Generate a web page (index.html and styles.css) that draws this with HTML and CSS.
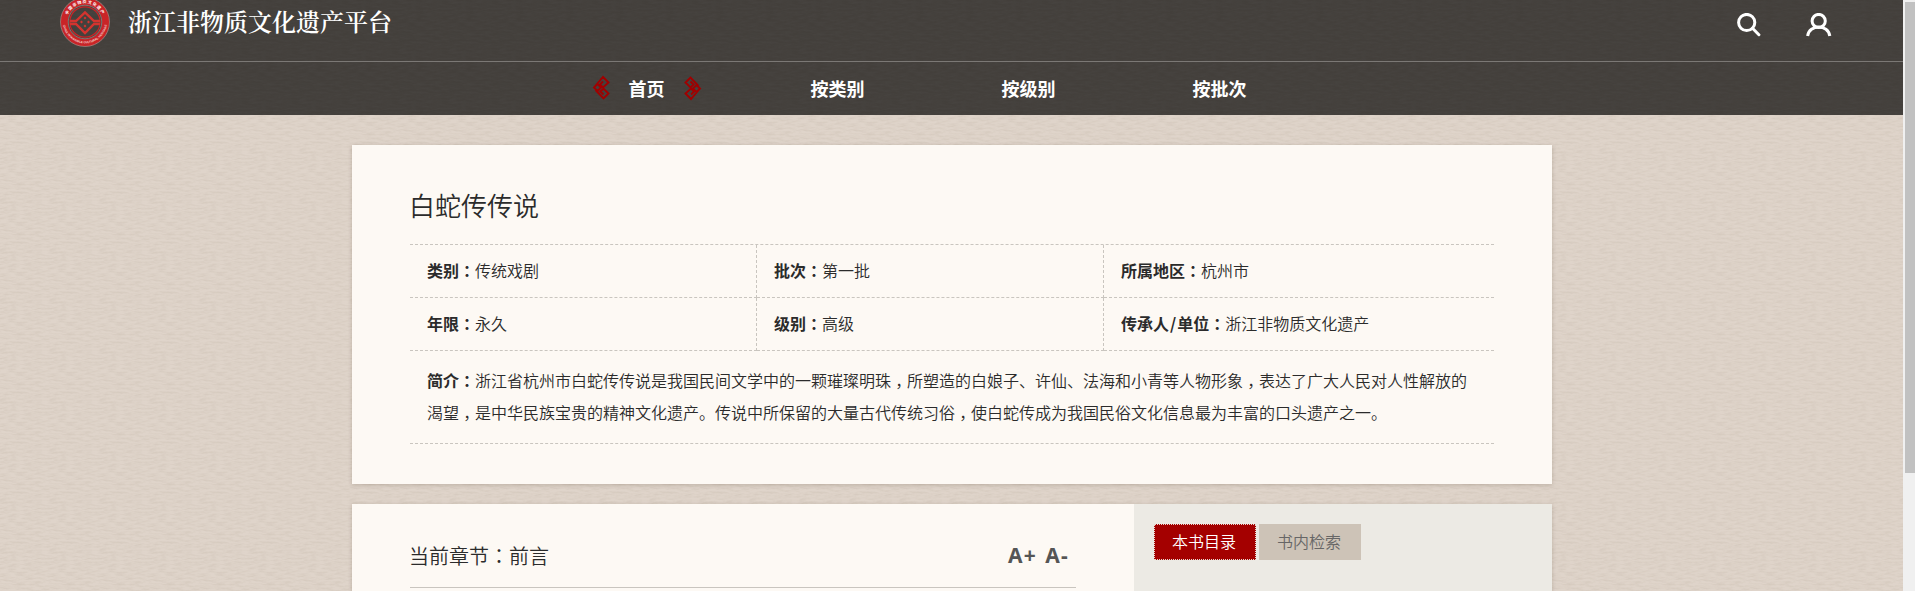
FILE: index.html
```html
<!DOCTYPE html>
<html lang="zh-CN">
<head>
<meta charset="utf-8">
<title>浙江非物质文化遗产平台</title>
<link rel="stylesheet" href="styles.css">
</head>
<body>
<div class="viewport">
<div class="page">
  <header class="header">
    <div class="topbar">
      <div class="brand">
        <svg class="logo" width="50" height="50" viewBox="0 0 50 50">
          <circle cx="25" cy="25" r="20.7" fill="none" stroke="#c92427" stroke-width="7.2"/>
          <circle cx="25" cy="25" r="24.5" fill="none" stroke="#b99a96" stroke-width=".6"/>
          <circle cx="25" cy="25" r="16.8" fill="none" stroke="#8f8581" stroke-width=".8"/>
          <circle cx="25" cy="25" r="15.2" fill="none" stroke="#c92427" stroke-width="1.2"/>
          <path d="M10 24H16L25 15.500L34 24H40M10 27H16L25 36L34 27H40" fill="none" stroke="#d4342f" stroke-width="2.400"/>
          <path d="M25 19.500l1.500 1.500L25 22.500l-1.500-1.500zM25 27.500l1.500 1.500L25 30.500l-1.500-1.500zM21.500 23.500l1.500 1.500-1.500 1.500-1.500-1.500zM28.500 23.500l1.500 1.500-1.500 1.500-1.500-1.500z" fill="#d4342f"/>
          <path id="arcTop" d="M6.300 25A18.700 18.700 0 0 1 43.700 25" fill="none"/>
          <path id="arcBottom" d="M2.700 24A22.300 22.300 0 0 0 47.300 24" fill="none"/>
          <text class="seal-cn"><textPath href="#arcTop" startOffset="50%" text-anchor="middle">中国非物质文化遗产</textPath></text>
          <text class="seal-en"><textPath href="#arcBottom" startOffset="50%" text-anchor="middle">CHINA INTANGIBLE CULTURAL HERITAGE</textPath></text>
        </svg>
        <span class="brand-name">浙江非物质文化遗产平台</span>
      </div>
      <div class="tools">
        <svg width="24" height="24" viewBox="0 0 24 24"><circle cx="9.700" cy="9.500" r="8.100"/><path d="M15.500 15.300L21.900 21.700" stroke-linecap="round"/></svg>
        <svg width="26" height="24" viewBox="0 0 26 24"><circle cx="12.700" cy="8" r="6.600"/><path d="M1.600 23C3 11 22.400 11 23.800 23"/></svg>
      </div>
    </div>
    <nav class="nav">
      <a class="nav-item active">
        <svg class="knot" width="18" height="26" viewBox="0 0 18 26"><path d="M2 12.500L11 2L16.500 7.500L11 12.500L8 9.500L11 6.500M2 12.500L5.500 9L9 12.500L5.500 16ZM3.500 15L11.500 23.500L16.500 18.500L11.500 13.500L8.500 16.500L11.500 19.500"/></svg>
        <span>首页</span>
        <svg class="knot" width="18" height="26" viewBox="0 0 18 26"><path transform="rotate(180 9 13)" d="M2 12.500L11 2L16.500 7.500L11 12.500L8 9.500L11 6.500M2 12.500L5.500 9L9 12.500L5.500 16ZM3.500 15L11.500 23.500L16.500 18.500L11.500 13.500L8.500 16.500L11.500 19.500"/></svg>
      </a>
      <a class="nav-item">按类别</a>
      <a class="nav-item">按级别</a>
      <a class="nav-item">按批次</a>
    </nav>
  </header>

  <main class="content">
    <section class="card detail">
      <h1>白蛇传传说</h1>
      <div class="facts">
        <div><b>类别<i lang="zh-TW">：</i></b>传统戏剧</div>
        <div><b>批次<i lang="zh-TW">：</i></b>第一批</div>
        <div><b>所属地区<i lang="zh-TW">：</i></b>杭州市</div>
        <div><b>年限<i lang="zh-TW">：</i></b>永久</div>
        <div><b>级别<i lang="zh-TW">：</i></b>高级</div>
        <div><b>传承人<span class="slash">/</span>单位<i lang="zh-TW">：</i></b>浙江非物质文化遗产</div>
      </div>
      <p class="intro"><b>简介<i lang="zh-TW">：</i></b>浙江省杭州市白蛇传传说是我国民间文学中的一颗璀璨明珠<u lang="zh-TW">，</u>所塑造的白娘子、许仙、法海和小青等人物形象<u lang="zh-TW">，</u>表达了广大人民对人性解放的<br>渴望<u lang="zh-TW">，</u>是中华民族宝贵的精神文化遗产。传说中所保留的大量古代传统习俗<u lang="zh-TW">，</u>使白蛇传成为我国民俗文化信息最为丰富的口头遗产之一。</p>
    </section>

    <section class="card reader">
      <div class="chapter">
        <div class="chapter-head">
          <h2>当前章节<i lang="zh-TW">：</i>前言</h2>
          <div class="zoomers"><span>A+</span><span>A-</span></div>
        </div>
      </div>
      <aside class="side">
        <button class="tab on">本书目录</button>
        <button class="tab">书内检索</button>
      </aside>
    </section>
  </main>
</div>
<div class="scroll"><div class="thumb"></div></div>
</div>
</body>
</html>
```
FILE: styles.css
```css
* { box-sizing: border-box; }
body {
  margin: 0;
  font: 350 16px "Noto Sans CJK SC", sans-serif;
  color: #2b2b2b;
  overflow: hidden;
}
i { font-style: normal; font-family: "Noto Sans CJK TC", sans-serif; }
u { font-family: "Noto Sans CJK TC", sans-serif; text-decoration: none; display: inline-block; transform: translateY(5px); }
b { font-weight: 700; }
.slash { padding: 0 1px; }

.viewport { display: flex; height: 591px; overflow: hidden; }
.page {
  width: 1903px;
  height: 591px;
  background: #dfd4ca url("data:image/svg+xml,%3Csvg xmlns='http://www.w3.org/2000/svg' width='50' height='50'%3E%3Cfilter id='n' x='0' y='0' width='100%25' height='100%25'%3E%3CfeTurbulence type='fractalNoise' baseFrequency='.12 .5' numOctaves='3' seed='11' stitchTiles='stitch'/%3E%3CfeColorMatrix values='0 0 0 0 .4 0 0 0 0 .33 0 0 0 0 .25 .36 0 0 0 -.13'/%3E%3C/filter%3E%3Crect width='50' height='50' filter='url(%23n)'/%3E%3C/svg%3E");
}

.header {
  height: 115px;
  background: #433f3b url("data:image/svg+xml,%3Csvg xmlns='http://www.w3.org/2000/svg' width='50' height='50'%3E%3Cfilter id='n' x='0' y='0' width='100%25' height='100%25'%3E%3CfeTurbulence type='fractalNoise' baseFrequency='.12 .5' numOctaves='3' seed='11' stitchTiles='stitch'/%3E%3CfeColorMatrix values='0 0 0 0 .1 0 0 0 0 .1 0 0 0 0 .1 .3 0 0 0 -.09'/%3E%3C/filter%3E%3Crect width='50' height='50' filter='url(%23n)'/%3E%3C/svg%3E");
}
.topbar {
  display: flex;
  justify-content: space-between;
  height: 62px;
  border-bottom: 1px solid #7b7875;
  padding: 0 71px 0 60px;
}
.brand { display: flex; gap: 18px; height: 50px; margin-top: -3px; }
.brand-name {
  font-family: "Noto Serif CJK SC", "Noto Sans CJK SC", serif;
  font-size: 24px;
  font-weight: 600;
  line-height: 48px;
  color: #fff;
}
.seal-cn { font: 700 4px "Noto Sans CJK SC", sans-serif; fill: #fff; letter-spacing: .9px; }
.seal-en { font: 700 3px "Liberation Sans", sans-serif; fill: #f3d8d6; }
.tools { display: flex; gap: 45px; padding-top: 13px; }
.tools svg { fill: none; stroke: #fff; stroke-width: 3; }

.nav { display: flex; height: 53px; padding-left: 551px; }
.nav-item {
  display: flex;
  justify-content: center;
  align-items: center;
  gap: 19px;
  width: 191px;
  padding-bottom: 2px;
  color: #fff;
  font-size: 18px;
  font-weight: 700;
}
.knot { fill: none; stroke: #a00000; stroke-width: 1.9; }

.content { width: 1200px; margin: 30px 0 0 352px; }
.card { background: #fdf9f4; box-shadow: 0 1px 4px rgba(60, 40, 20, .2); }
.detail { height: 339px; padding: 38px 58px 0; }
h1 { margin: 0 0 0 -1px; font-size: 26px; line-height: 44px; font-weight: 350; height: 61px; }
.facts {
  display: grid;
  grid-template-columns: 347px 347px 390px;
  border-top: 1px dashed #c9c5bf;
}
.facts div {
  height: 53px;
  line-height: 50px;
  padding-left: 17px;
  border-bottom: 1px dashed #c9c5bf;
  border-right: 1px dashed #c9c5bf;
}
.facts div:nth-child(3n) { border-right: 0; }
.intro {
  margin: 0;
  height: 93px;
  padding: 13px 0 0 17px;
  line-height: 32px;
  white-space: nowrap;
  border-bottom: 1px dashed #c9c5bf;
}

.reader { display: flex; height: 200px; margin-top: 20px; }
.chapter { width: 782px; padding: 30px 58px 0; }
.chapter-head {
  display: flex;
  justify-content: space-between;
  height: 54px;
  line-height: 43px;
  border-bottom: 1px solid #c9c5bf;
}
h2 { margin: 0 0 0 -1px; font-size: 20px; font-weight: 350; }
.zoomers {
  display: flex;
  gap: 8px;
  padding-right: 7px;
  font: 700 21px/43px "Noto Sans", "Open Sans", sans-serif;
  letter-spacing: 1.3px;
  color: #555;
}
.side { display: flex; gap: 3px; flex: 1; padding: 20px; background: #eceae4; align-items: flex-start; }
.tab {
  width: 102px;
  height: 36px;
  padding: 0 2px 2px 0;
  border: 0;
  background: #cdc3b7;
  color: #666;
  font: inherit;
}
.tab.on { background: #a40000; color: #fff; border: 1px dotted #e8d9d0; }

.scroll { width: 12px; background: #f0f0f0; padding: 2px 0 0 2px; }
.thumb { height: 471px; background: #c1c1c1; }
```
